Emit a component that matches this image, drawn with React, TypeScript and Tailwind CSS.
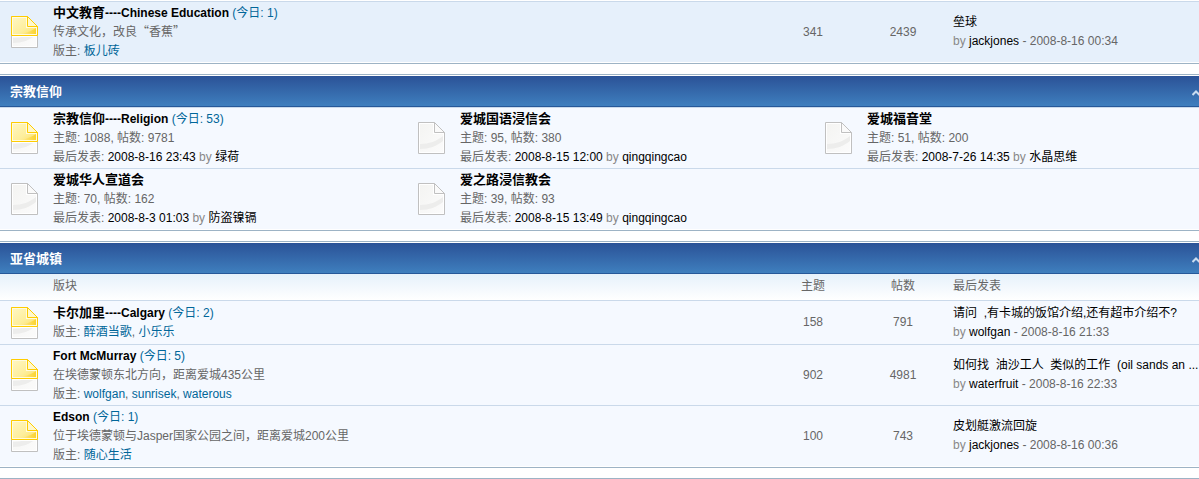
import React from 'react';

interface Forum {
  name: string;
  suffix?: string;
  today?: number;
  isNew?: boolean;
  description?: React.ReactNode;
  moderators: string[];
  threads: number;
  posts: number;
  lastTitle: string;
  lastUser: string;
  lastTime: string;
  hot?: boolean;
}

interface SmallForum {
  name: string;
  suffix?: string;
  today?: number;
  isNew?: boolean;
  threads: number;
  posts: number;
  lastTime: string;
  lastUser: string;
}

const educationForums: Forum[] = [
  {
    name: '中文教育',
    suffix: '----Chinese Education',
    today: 1,
    isNew: true,
    description: <>传承文化，改良<span className="font-['Noto_Sans_CJK_SC',sans-serif] leading-none">“香蕉”</span></>,
    moderators: ['板儿砖'],
    threads: 341,
    posts: 2439,
    lastTitle: '垒球',
    lastUser: 'jackjones',
    lastTime: '2008-8-16 00:34',
    hot: true,
  },
];

const religionForums: SmallForum[] = [
  { name: '宗教信仰', suffix: '----Religion', today: 53, isNew: true, threads: 1088, posts: 9781, lastTime: '2008-8-16 23:43', lastUser: '绿荷' },
  { name: '爱城国语浸信会', threads: 95, posts: 380, lastTime: '2008-8-15 12:00', lastUser: 'qingqingcao' },
  { name: '爱城福音堂', threads: 51, posts: 200, lastTime: '2008-7-26 14:35', lastUser: '水晶思维' },
  { name: '爱城华人宣道会', threads: 70, posts: 162, lastTime: '2008-8-3 01:03', lastUser: '防盗镍镉' },
  { name: '爱之路浸信教会', threads: 39, posts: 93, lastTime: '2008-8-15 13:49', lastUser: 'qingqingcao' },
];

const townForums: Forum[] = [
  {
    name: '卡尔加里',
    suffix: '----Calgary',
    today: 2,
    isNew: true,
    moderators: ['醉酒当歌', '小乐乐'],
    threads: 158,
    posts: 791,
    lastTitle: '请问\u00a0 ,有卡城的饭馆介绍,还有超市介绍不?',
    lastUser: 'wolfgan',
    lastTime: '2008-8-16 21:33',
  },
  {
    name: '',
    suffix: 'Fort McMurray',
    today: 5,
    isNew: true,
    description: '在埃德蒙顿东北方向，距离爱城435公里',
    moderators: ['wolfgan', 'sunrisek', 'waterous'],
    threads: 902,
    posts: 4981,
    lastTitle: '如何找\u00a0 油沙工人\u00a0 类似的工作\u00a0 (oil sands an ...',
    lastUser: 'waterfruit',
    lastTime: '2008-8-16 22:33',
  },
  {
    name: '',
    suffix: 'Edson',
    today: 1,
    isNew: true,
    description: '位于埃德蒙顿与Jasper国家公园之间，距离爱城200公里',
    moderators: ['随心生活'],
    threads: 100,
    posts: 743,
    lastTitle: '皮划艇激流回旋',
    lastUser: 'jackjones',
    lastTime: '2008-8-16 00:36',
  },
];

const FolderIcon: React.FC<{ isNew?: boolean }> = ({ isNew }) => (
  <svg width="27" height="32" viewBox="0 0 27 32" className="block shrink-0" aria-hidden="true">
    <defs>
      <linearGradient id="paperGray" x1="0" y1="0" x2="1" y2="1">
        <stop offset="0" stopColor="#f4f4f2" />
        <stop offset="1" stopColor="#fbfbfb" />
      </linearGradient>
      <linearGradient id="paperYellow" x1="0" y1="0" x2="1" y2="1">
        <stop offset="0" stopColor="#fff6c0" />
        <stop offset="0.6" stopColor="#fdee9c" />
        <stop offset="1" stopColor="#fbe06a" />
      </linearGradient>
      <linearGradient id="shadeYellow" x1="0" y1="0" x2="1" y2="0">
        <stop offset="0" stopColor="#fdea90" />
        <stop offset="1" stopColor="#fbd330" />
      </linearGradient>
    </defs>
    <path d="M0.5 0.5H16.5L26.5 10.5V31.5H0.5Z" fill="#fff" stroke="#c0c0c0" />
    <path d="M2 2H15V12H25V30H2Z" fill="url(#paperGray)" />
    <path d="M2 22C11 22 19 19 25 14V19C19 24 11 27 2 27Z" fill="#ededec" />
    <path d="M16.5 0.5V10.5H26.5Z" fill="#fafafa" stroke="#c0c0c0" />
    {isNew && (
      <>
        <path d="M0.5 0.5H16.5L26.5 10.5V19.5H0.5Z" fill="#fffbe0" stroke="#fc0" />
        <path d="M2 2H15V12H25V18H2Z" fill="url(#paperYellow)" />
        <path d="M11 18C18 16 22 14 25 12V18Z" fill="url(#shadeYellow)" />
        <path d="M16.5 0.5V10.5H26.5Z" fill="#fff8cc" stroke="#fc0" />
        <path d="M1 20.5H26" stroke="#fff" />
      </>
    )}
  </svg>
);

const ForumTitle: React.FC<{ name: string; suffix?: string; today?: number }> = ({ name, suffix, today }) => (
  <h2 className="h-[19px] whitespace-nowrap">
    <a href="#" className="font-bold text-black">
      {name && <span className="text-[13px] leading-none">{name}</span>}
      {suffix}
    </a>
    {today && <span className="text-[#006699]"> (今日: {today})</span>}
  </h2>
);

const Panel: React.FC<{ title: string; children?: React.ReactNode }> = ({ title, children }) => (
  <section className="mb-2.5 border-y border-[#9db3c5] py-px">
    <header className="flex h-[31px] items-center justify-between border-b border-[#265899] bg-linear-to-b from-[#2b5297] to-[#3f7fbe] pl-2.5">
      <h3 className="text-[13px] font-bold text-white"><a href="#">{title}</a></h3>
      <button type="button" aria-label="收起" className="h-full overflow-hidden pt-1">
        <svg width="7" height="6" viewBox="0 0 7 6" className="block">
          <path d="M0.5 5L4 1.5L7.5 5" fill="none" stroke="#c9dcf0" strokeWidth="2" />
        </svg>
      </button>
    </header>
    {children}
  </section>
);

const ForumTable: React.FC<{ forums: Forum[]; showHead?: boolean }> = ({ forums, showHead }) => (
  <table className="w-full table-fixed border-separate border-spacing-0 text-left">
    <colgroup>
      <col />
      <col className="w-[90px]" />
      <col className="w-[90px]" />
      <col className="w-[251px]" />
    </colgroup>
    {showHead && (
      <thead>
        <tr className="h-[26px] bg-linear-to-b from-[#e6f1fb] to-white">
          <th className="p-0 pb-0.5 pl-[53px] font-normal">版块</th>
          <th className="p-0 pb-0.5 text-center font-normal">主题</th>
          <th className="p-0 pb-0.5 text-center font-normal">帖数</th>
          <th className="p-0 pb-0.5 pl-[5px] font-normal">最后发表</th>
        </tr>
      </thead>
    )}
    <tbody>
      {forums.map(forum => (
        <tr
          key={forum.name + forum.suffix}
          className={`[&>td]:border-t [&>td]:border-[#cad9ea] ${forum.description ? 'h-[61px]' : 'h-11'} ${forum.hot ? 'bg-[#e6f0fb]' : 'bg-[#f5f9ff]'}`}
        >
          <td className="p-0 pl-[11px]">
            <div className="flex items-center gap-[15px]">
              <FolderIcon isNew={forum.isNew} />
              <div>
                <ForumTitle name={forum.name} suffix={forum.suffix} today={forum.today} />
                {forum.description && <p className="h-[19px]">{forum.description}</p>}
                <p className="h-[19px]">
                  版主:{' '}
                  {forum.moderators.map((moderator, i) => (
                    <React.Fragment key={moderator}>
                      {i > 0 && ', '}
                      <a href="#" className="text-[#006699]">{moderator}</a>
                    </React.Fragment>
                  ))}
                </p>
              </div>
            </div>
          </td>
          <td className="p-0 text-center">{forum.threads}</td>
          <td className="p-0 text-center">{forum.posts}</td>
          <td className="p-0 pl-[5px] whitespace-nowrap">
            <p className="h-[19px]"><a href="#" className="text-black">{forum.lastTitle}</a></p>
            <p className="h-[19px]">
              <span className="text-[#888]">by</span> <a href="#" className="text-black">{forum.lastUser}</a> - {forum.lastTime}
            </p>
          </td>
        </tr>
      ))}
    </tbody>
  </table>
);

const ForumGrid: React.FC<{ forums: SmallForum[] }> = ({ forums }) => {
  const rows = [forums.slice(0, 3), forums.slice(3, 6)];
  return (
    <div>
      {rows.map((row, i) => (
        <div key={i} className="grid h-[61px] grid-cols-[407fr_407fr_385fr] border-t border-[#cad9ea] bg-[#f5f9ff]">
          {row.map(forum => (
            <div key={forum.name} className="flex items-center gap-[15px] pl-[11px] whitespace-nowrap">
              <FolderIcon isNew={forum.isNew} />
              <div>
                <ForumTitle name={forum.name} suffix={forum.suffix} today={forum.today} />
                <p className="h-[19px]">主题: {forum.threads}, 帖数: {forum.posts}</p>
                <p className="h-[19px]">
                  最后发表: <a href="#" className="text-black">{forum.lastTime}</a>{' '}
                  <span className="text-[#888]">by</span> <a href="#" className="text-black">{forum.lastUser}</a>
                </p>
              </div>
            </div>
          ))}
        </div>
      ))}
    </div>
  );
};

const App: React.FC = () => {
  return (
    <main lang="zh-CN" className="overflow-x-hidden bg-white font-['Liberation_Sans','Noto_Sans_CJK_SC',sans-serif] text-[12px] leading-[19px] text-[#666]">
      <section className="mb-2.5 border-b border-[#9db3c5] py-px">
        <ForumTable forums={educationForums} />
      </section>
      <Panel title="宗教信仰">
        <ForumGrid forums={religionForums} />
      </Panel>
      <Panel title="亚省城镇">
        <ForumTable forums={townForums} showHead />
      </Panel>
      <div className="border-t border-[#9db3c5]" />
    </main>
  );
};

export default App;
